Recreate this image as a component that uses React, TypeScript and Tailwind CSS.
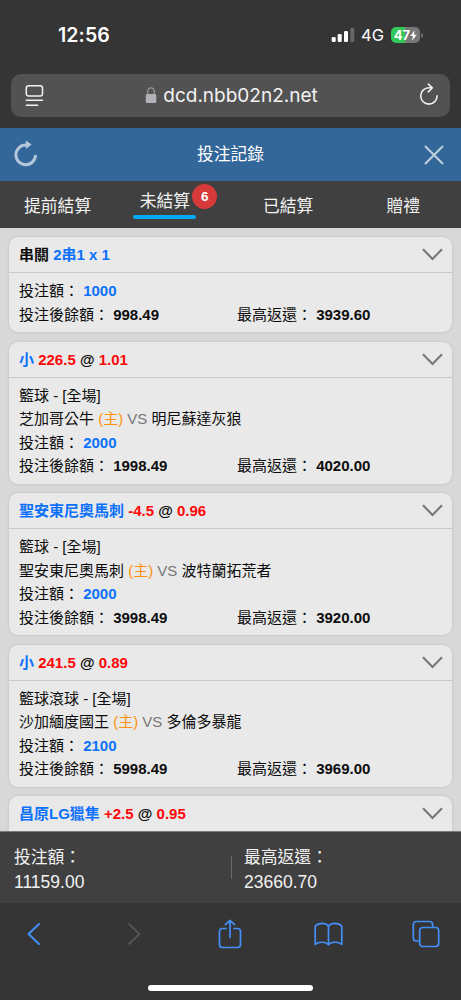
import { type ReactNode } from "react";
import clsx from "clsx";

interface IBet {
  id: number;
  title: ReactNode;
  category?: string;
  home?: string;
  away?: string;
  amount?: string;
  balance?: string;
  maxReturn?: string;
}

const Odds = ({ pick, line, price }: { pick: string; line: string; price: string }) => (
  <>
    <span className="text-[#0b71fb]">{pick}</span> <span className="text-[#fd0808]">{line}</span> @{" "}
    <span className="text-[#fd0808]">{price}</span>
  </>
);

const bets: IBet[] = [
  {
    id: 1,
    title: (
      <>
        串關 <span className="text-[#0b71fb]">2串1 x 1</span>
      </>
    ),
    amount: "1000",
    balance: "998.49",
    maxReturn: "3939.60",
  },
  {
    id: 2,
    title: <Odds pick="小" line="226.5" price="1.01" />,
    category: "籃球 - [全場]",
    home: "芝加哥公牛",
    away: "明尼蘇達灰狼",
    amount: "2000",
    balance: "1998.49",
    maxReturn: "4020.00",
  },
  {
    id: 3,
    title: <Odds pick="聖安東尼奧馬刺" line="-4.5" price="0.96" />,
    category: "籃球 - [全場]",
    home: "聖安東尼奧馬刺",
    away: "波特蘭拓荒者",
    amount: "2000",
    balance: "3998.49",
    maxReturn: "3920.00",
  },
  {
    id: 4,
    title: <Odds pick="小" line="241.5" price="0.89" />,
    category: "籃球滾球 - [全場]",
    home: "沙加緬度國王",
    away: "多倫多暴龍",
    amount: "2100",
    balance: "5998.49",
    maxReturn: "3969.00",
  },
  {
    id: 5,
    title: <Odds pick="昌原LG獵隼" line="+2.5" price="0.95" />,
  },
];

const StatusBar = () => (
  <div className="flex h-[74px] items-start justify-between pt-[23px] pr-[38px] pl-[58px] font-['Inter',sans-serif] text-white">
    <span className="text-[19.5px] leading-6 font-semibold tracking-[0.1px]">12:56</span>
    <div className="flex h-6 items-center">
      <svg width="24" height="16" viewBox="0 0 24 16" fill="#fff">
        <rect x="0.7" y="10" width="4" height="5" rx="1.2" />
        <rect x="6.7" y="7" width="4" height="8" rx="1.2" />
        <rect x="13" y="4" width="4" height="11" rx="1.2" />
        <rect x="19.3" y="0.8" width="4" height="14.2" rx="1.2" fill="#666" />
      </svg>
      <span className="ml-[6px] text-[16.5px]">4G</span>
      <div className="ml-[7px] flex h-4 w-[29px] items-center justify-center rounded-[5px] bg-linear-to-r from-[#34c759] from-47% to-[#777] to-47% text-[13px] leading-none font-bold">
        <span>47</span>
        <svg width="7" height="11" viewBox="0 0 7 11" fill="#fff">
          <path d="M4.6 0.3 0.3 6.1h2.6L2.1 10.7 6.7 4.7H4z" />
        </svg>
      </div>
      <div className="ml-px h-[5px] w-[2px] rounded-r-full bg-[#6b6b6b]" />
    </div>
  </div>
);

const AddressBar = () => (
  <div className="mx-[11px] flex h-[43px] items-center justify-between rounded-[10px] bg-[#525252] pr-[11px] pl-[14px] font-['Inter',sans-serif] text-[#f2f2f2]">
    <svg width="19" height="23" viewBox="0 0 19 23" fill="none" stroke="currentColor" strokeWidth="1.5" strokeLinecap="round">
      <rect x="1.3" y="1.7" width="16.2" height="10.3" rx="2.3" />
      <path d="M1.3 16.3h16.2M1.3 21.2h11.3" />
    </svg>
    <div className="flex items-center">
      <svg width="12" height="18" viewBox="0 0 12 18" className="mr-[6px] -mt-px">
        <path d="M2.7 9V5.7a3.2 3.8 0 0 1 6.6 0V9" fill="none" stroke="#99989d" strokeWidth="1.3" />
        <rect x="0.8" y="8" width="10.5" height="9" rx="1.6" fill="#b3b1b8" />
      </svg>
      <span className="pt-[2px] text-[19px]">dcd.nbb02n2.net</span>
    </div>
    <svg width="20" height="24" viewBox="0 0 20 24" fill="none" stroke="currentColor" strokeWidth="1.6" strokeLinecap="round" strokeLinejoin="round" className="-mt-[2px]">
      <path d="M18.1 12.8a8.2 8.2 0 1 1-8.2-8.1h3.3M9.3 1.2l4.1 3.6-4.1 4.1" />
    </svg>
  </div>
);

const TitleBar = () => (
  <header className="flex h-[53px] items-center justify-between bg-[#336699] pr-[17px] pl-[14px] text-white">
    <svg width="25" height="28" viewBox="0 0 25 28" className="-mt-[3px]">
      <path d="M21.5 16a9.8 9.8 0 1 1-9.8-9.9h1.5" fill="none" stroke="#b4c7db" strokeWidth="3" />
      <path d="M11.9 1.5v8.4l5.8-4.4z" fill="#b4c7db" />
    </svg>
    <h1 className="-ml-[2px] text-[16.8px]">投注記錄</h1>
    <svg width="20" height="20" viewBox="0 0 20 20" stroke="#c1d1e0" strokeWidth="2" strokeLinecap="round">
      <path d="M1.5 1.5l17 17M18.5 1.5l-17 17" />
    </svg>
  </header>
);

const Tabs = () => (
  <nav className="grid h-[47px] grid-cols-4 bg-[#404040] text-center text-[16.8px] leading-6 text-[#f2f2f2]">
    <button className="pt-[4px]">提前結算</button>
    <button className="flex items-start justify-center pl-[5px]">
      <span className="flex h-[38px] w-[63px] flex-col items-center justify-between pt-[9px]">
        <span className="whitespace-nowrap">未結算</span>
        <span className="h-1 w-full shrink-0 rounded-full bg-[#03a9f4]" />
      </span>
      <span className="mt-[3px] -ml-1 flex size-[25px] items-center justify-center rounded-full bg-[#d63a3b] text-[13.5px] font-bold text-white">
        6
      </span>
    </button>
    <button className="pt-[4px]">已結算</button>
    <button className="pt-[4px]">贈禮</button>
  </nav>
);

const BetCard = ({ bet }: { bet: IBet }) => (
  <article className="shrink-0 rounded-[9px] bg-[#e9e9e9] shadow-[0_0_3px_rgba(0,0,0,0.13)]">
    <div className="flex h-9 items-center justify-between border-b border-[#cacaca] pr-[9px] pl-[10px] font-bold">
      <h2 className="pt-px">{bet.title}</h2>
      <svg width="21" height="13" viewBox="0 0 21 13" fill="none" stroke="#777" strokeWidth="2.1">
        <path d="M1 1.3l9.5 9.6L20 1.3" />
      </svg>
    </div>

    {bet.amount ? (
      <div className="px-[10px] py-[6px] leading-[23.5px]">
        {bet.category && <p>{bet.category}</p>}
        {bet.home && (
          <p>
            {bet.home} <span className="text-[#ff920a]">(主)</span> <span className="text-[#777]">VS</span> {bet.away}
          </p>
        )}
        <p>
          投注額： <b className="text-[#0b71fb]">{bet.amount}</b>
        </p>
        <div className="flex">
          <p className="w-[218px]">
            投注後餘額： <b>{bet.balance}</b>
          </p>
          <p>
            最高返還： <b>{bet.maxReturn}</b>
          </p>
        </div>
      </div>
    ) : (
      <div className="h-10" />
    )}
  </article>
);

const Total = ({ label, value, divided }: { label: string; value: string; divided?: boolean }) => (
  <div className={clsx("flex items-center", divided ? "gap-[12px]" : "w-[217px]")}>
    {divided && <span className="h-[23px] w-px bg-[#6b6b6b]" />}
    <div className="pt-[4px]">
      <p className="text-[16.8px] leading-6">{label}</p>
      <p className="text-[17.5px] leading-6">{value}</p>
    </div>
  </div>
);

const BrowserToolbar = () => (
  <footer className="h-[97px] bg-[#353535]">
    <div className="flex h-[62px] items-center pl-[27px] text-[#438ef7]">
      <svg width="14" height="24" viewBox="0 0 14 24" fill="none" stroke="currentColor" strokeWidth="2" strokeLinecap="round" strokeLinejoin="round">
        <path d="M12 2L1.6 12 12 22" />
      </svg>
      <svg width="14" height="24" viewBox="0 0 14 24" fill="none" stroke="#555" strokeWidth="1.8" strokeLinecap="round" strokeLinejoin="round" className="ml-[86px]">
        <path d="M2 2l10.4 10L2 22" />
      </svg>
      <svg width="24" height="30" viewBox="0 0 24 30" fill="none" stroke="currentColor" strokeWidth="1.7" strokeLinecap="round" strokeLinejoin="round" className="ml-[77px]">
        <path d="M8 9.5H4.5A3 3 0 0 0 1.5 12.5V25.5A3 3 0 0 0 4.5 28.5H19.5A3 3 0 0 0 22.5 25.5V12.5A3 3 0 0 0 19.5 9.5H16M12 18.5V1.5M7.4 5.7L12 1.3l4.6 4.4" />
      </svg>
      <svg width="29" height="24" viewBox="0 0 29 24" fill="none" stroke="currentColor" strokeWidth="1.7" strokeLinecap="round" strokeLinejoin="round" className="ml-[72px]">
        <path d="M14.5 4.3C12.5 .4 4.5 .3 1.2 4.2V22.3C4.5 19.5 12 19.5 14.5 22.8C17 19.5 24.5 19.5 27.8 22.3V4.2C24.5 .3 16.5 .4 14.5 4.3V22.5" />
      </svg>
      <svg width="28" height="28" viewBox="0 0 28 28" fill="none" stroke="currentColor" strokeWidth="1.7" strokeLinejoin="round" className="ml-[69px]">
        <rect x="7.7" y="7.5" width="19" height="19" rx="3" />
        <path d="M7.5 21H4.3A3 3 0 0 1 1.3 18V4.5A3 3 0 0 1 4.3 1.5H17.6A3 3 0 0 1 20.6 4.5V7.5" />
      </svg>
    </div>
    <div className="mx-auto mt-[19.5px] h-[6px] w-[165px] rounded-full bg-white" />
  </footer>
);

export default function App() {
  return (
    <div className="flex h-[1000px] w-[461px] flex-col overflow-hidden bg-[#353535] font-['Liberation_Sans','Noto_Sans_CJK_TC',sans-serif]">
      <div className="h-[128px]">
        <StatusBar />
        <AddressBar />
      </div>
      <TitleBar />
      <Tabs />

      {/* Bet list */}
      <main className="flex min-h-0 flex-1 flex-col gap-[9.5px] overflow-hidden bg-[#d8d8d8] px-[9px] pt-[9.3px] text-[15px] text-[#0c0c0c]">
        {bets.map((bet) => (
          <BetCard key={bet.id} bet={bet} />
        ))}
      </main>

      {/* Totals */}
      <div className="flex h-[72px] items-center border-t border-[#7b7b7b] bg-[#404040] px-[14px] text-[#f2f2f2]">
        <Total label="投注額：" value="11159.00" />
        <Total label="最高返還：" value="23660.70" divided />
      </div>
      <BrowserToolbar />
    </div>
  );
}
